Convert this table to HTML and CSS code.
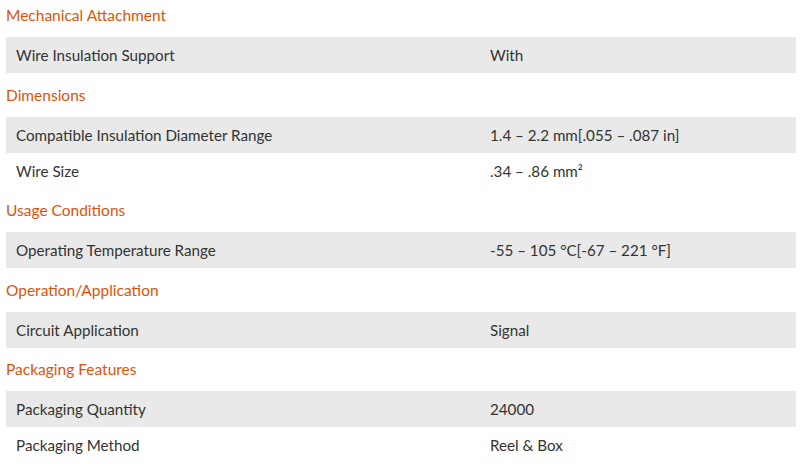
FILE: index.html
```html
<!DOCTYPE html>
<html>
<head>
<meta charset="utf-8">
<link rel="stylesheet" href="styles.css">
</head>
<body>
<div class="specs">
  <section class="group">
    <h3 class="group-title">Mechanical Attachment</h3>
    <div class="row"><span class="label">Wire Insulation Support</span><span class="value">With</span></div>
  </section>
  <section class="group">
    <h3 class="group-title">Dimensions</h3>
    <div class="row"><span class="label">Compatible Insulation Diameter Range</span><span class="value">1.4 – 2.2 mm[.055 – .087 in]</span></div>
    <div class="row"><span class="label">Wire Size</span><span class="value">.34 – .86 mm²</span></div>
  </section>
  <section class="group">
    <h3 class="group-title">Usage Conditions</h3>
    <div class="row"><span class="label">Operating Temperature Range</span><span class="value">-55 – 105 °C[-67 – 221 °F]</span></div>
  </section>
  <section class="group">
    <h3 class="group-title">Operation/Application</h3>
    <div class="row"><span class="label">Circuit Application</span><span class="value">Signal</span></div>
  </section>
  <section class="group">
    <h3 class="group-title">Packaging Features</h3>
    <div class="row"><span class="label">Packaging Quantity</span><span class="value">24000</span></div>
    <div class="row"><span class="label">Packaging Method</span><span class="value">Reel &amp; Box</span></div>
  </section>
</div>
</body>
</html>
```
FILE: styles.css
```css
html, body {
  margin: 0;
  padding: 0;
  background: #ffffff;
}
body {
  font-family: Lato, "Open Sans", sans-serif;
  color: #333333;
}
.specs {
  width: 790px;
  margin-left: 6px;
}
.group + .group {
  margin-top: 6.5px;
}
.group-title {
  margin: 0;
  padding: 5px 0 12px 0;
  font-size: 15.5px;
  line-height: 20px;
  font-weight: 400;
  color: #e05206;
}
.row {
  display: flex;
  align-items: center;
  height: 36px;
  font-size: 15.2px;
}
.row:nth-of-type(odd) {
  background: #e8e9e8;
}
.label {
  width: 474px;
  padding-left: 10px;
}
.value {
  flex: 1;
}
```
